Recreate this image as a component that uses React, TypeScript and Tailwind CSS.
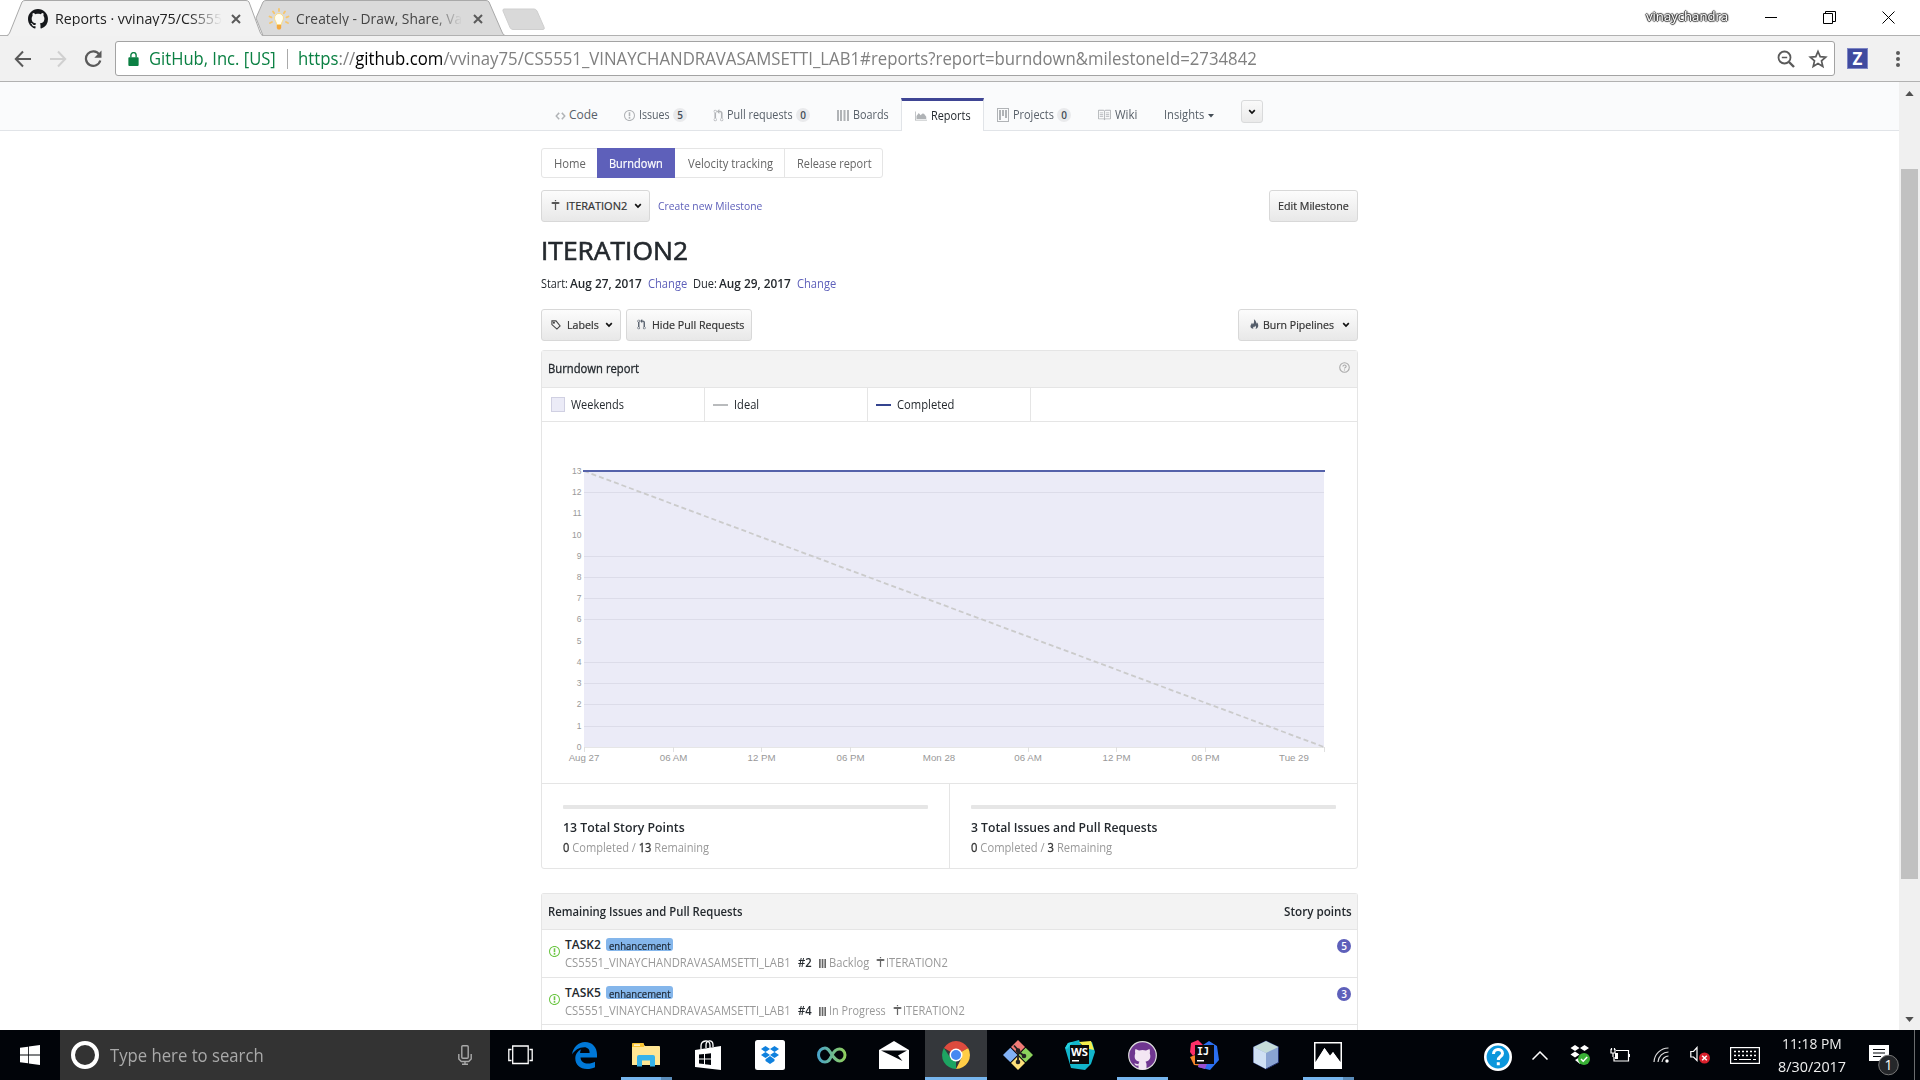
import React, { useLayoutEffect, useRef, useState } from "react";

/* Single line of text condensed or widened to the width of its box. */
function Fit({ className = "", children }: { className?: string; children: React.ReactNode }) {
  const outer = useRef<HTMLSpanElement>(null);
  const inner = useRef<HTMLSpanElement>(null);
  const [scale, setScale] = useState(1);
  useLayoutEffect(() => {
    if (outer.current && inner.current) {
      setScale(outer.current.offsetWidth / inner.current.offsetWidth);
    }
  }, []);
  return (
    <span ref={outer} className={"inline-block shrink-0 whitespace-pre " + className}>
      <span ref={inner} className="inline-block origin-left" style={{ transform: `scaleX(${scale})` }}>
        {children}
      </span>
    </span>
  );
}

const paths = {
  code: "M9.5 3L8 4.5 11.5 8 8 11.5 9.5 13 14 8 9.5 3zm-5 0L0 8l4.5 5L6 11.5 2.5 8 6 4.5 4.5 3z",
  issue:
    "M7 2.3c3.14 0 5.7 2.56 5.7 5.7s-2.56 5.7-5.7 5.7A5.71 5.71 0 0 1 1.3 8c0-3.14 2.56-5.7 5.7-5.7zM7 1C3.14 1 0 4.14 0 8s3.14 7 7 7 7-3.14 7-7-3.14-7-7-7zm1 3H6v5h2V4zm0 6H6v2h2v-2z",
  pull: "M11 11.28V5c-.03-.78-.34-1.47-.94-2.06C9.46 2.35 8.78 2.03 8 2H7V0L4 3l3 3V4h1c.27.02.48.11.69.31.21.2.3.42.31.69v6.28A1.993 1.993 0 0 0 10 15a1.993 1.993 0 0 0 1-3.72zm-1 2.92c-.66 0-1.2-.55-1.2-1.2 0-.65.55-1.2 1.2-1.2.65 0 1.2.55 1.2 1.2 0 .65-.55 1.2-1.2 1.2zM4 3c0-1.11-.89-2-2-2a1.993 1.993 0 0 0-1 3.72v6.56A1.993 1.993 0 0 0 2 15a1.993 1.993 0 0 0 1-3.72V4.72c.59-.34 1-.98 1-1.72zm-.8 10c0 .66-.55 1.2-1.2 1.2-.65 0-1.2-.55-1.2-1.2 0-.65.55-1.2 1.2-1.2.65 0 1.2.55 1.2 1.2zM2 4.2C1.34 4.2.8 3.65.8 3c0-.65.55-1.2 1.2-1.2.65 0 1.2.55 1.2 1.2 0 .65-.55 1.2-1.2 1.2z",
  boards: "M0 1h2v11H0zM3 1h2v11H3zM6.500 1h2v11h-2zM10 1h2v11h-2z",
  bars: "M0 0h1.700v9H0zM2.700 0h1.700v9H2.700zM5.400 0h1.700v9H5.400z",
  graph: "M0 2h1v11h15v1H0zM2 12V8l3-4 2.5 3L10 4.5 12 5l3 4v3z",
  project: "M0 0h12v14H0zM1 1v12h10V1zM2 2h2v10H2zM5 2h2v6H5zM8 2h2v8H8z",
  book: "M3 5h4v1H3V5zm0 3h4V7H3v1zm0 2h4V9H3v1zm11-5h-4v1h4V5zm0 2h-4v1h4V7zm0 2h-4v1h4V9zm2-6v9c0 .55-.45 1-1 1H9.5l-1 1-1-1H2c-.55 0-1-.45-1-1V3c0-.55.45-1 1-1h5.5l1 1 1-1H15c.55 0 1 .45 1 1zm-8 .5L7.5 3H2v9h6V3.5zm7-.5H9.5l-.5.5V12h6V3z",
  milestone: "M6 0h2v2H6zM2 3h10l2 1.7L12 6.5H8V16H6V6.5H2L0 4.7z",
  github:
    "M8 0C3.58 0 0 3.58 0 8c0 3.54 2.29 6.53 5.47 7.59.4.07.55-.17.55-.38 0-.19-.01-.82-.01-1.49-2.01.37-2.53-.49-2.69-.94-.09-.23-.48-.94-.82-1.13-.28-.15-.68-.52-.01-.53.63-.01 1.08.58 1.23.82.72 1.21 1.87.87 2.33.66.07-.52.28-.87.51-1.07-1.78-.2-3.64-.89-3.64-3.95 0-.87.31-1.59.82-2.15-.08-.2-.36-1.02.08-2.12 0 0 .67-.21 2.2.82.64-.18 1.32-.27 2-.27.68 0 1.36.09 2 .27 1.53-1.04 2.2-.82 2.2-.82.44 1.1.16 1.92.08 2.12.51.56.82 1.27.82 2.15 0 3.07-1.87 3.75-3.65 3.95.29.25.54.73.54 1.48 0 1.07-.01 1.93-.01 2.2 0 .21.15.46.55.38A8.013 8.013 0 0 0 16 8c0-4.42-3.58-8-8-8z",
  flame:
    "M6 16C2 16 0 13.500 1 10.500C1.500 8.800 3 8 3 6C4.500 7 4.700 8 4.600 9C6.500 7 7.500 3.500 6.500 0C10 2 10.500 5 10.500 7.500C11.300 7 11.500 6 11.500 5C14 8 14.500 11 13 13.500C12 15.200 10.500 16 9 16C10.500 14.500 10.500 12.500 8.500 10.500C8.500 12 7.500 12.500 7 13.500C6.500 12.900 6.300 12.500 6.200 12C5 13.500 5 15 6 16Z",
};

function Oct({ d, box, className }: { d: string; box: string; className: string }) {
  return (
    <svg viewBox={box} className={"block shrink-0 fill-current " + className}>
      <path d={d} fillRule="evenodd" />
    </svg>
  );
}

function Chevron({ className = "" }: { className?: string }) {
  return (
    <svg viewBox="0 0 8 6" className={"block h-[6px] w-[8px] shrink-0 fill-none stroke-[#111] stroke-[1.700] " + className}>
      <path d="M1.200 1.200 4 4 6.800 1.200" />
    </svg>
  );
}

function Close({ className = "" }: { className?: string }) {
  return (
    <svg viewBox="0 0 10 10" className={"block size-[10px] shrink-0 fill-none stroke-[#5a5a5a] stroke-2 " + className}>
      <path d="M1 1 9 9M9 1 1 9" />
    </svg>
  );
}

function TabStrip() {
  return (
    <div className="flex h-[35px] bg-white pl-[7px]">
      <div className="relative z-10 h-[36px] w-[256px] shrink-0">
        <svg viewBox="0 0 256 36" className="absolute inset-0 h-[36px] w-[256px]">
          <path d="M0 36 L2 35 L15 2 Q16 .5 18 .5 H239 Q241 .5 242 2 L254 35 L256 36Z" fill="#f2f2f2" />
          <path d="M0 35.500 Q2 35 3 32 L15 2 Q16 .5 18 .5 H239 Q241 .5 242 2 L253 32 Q254 35 256 35.500" fill="none" stroke="#a9a9a9" />
        </svg>
        <div className="relative flex h-[37px] items-center pl-[21px]">
          <Oct d={paths.github} box="0 0 16 16" className="size-[20px] text-[#16181b]" />
          <Fit className="ml-[7px] w-[167px] text-[15px] text-[#222] [mask-image:linear-gradient(to_right,#000_80%,transparent)]">
            Reports · vvinay75/CS555
          </Fit>
          <Close className="ml-[9px]" />
        </div>
      </div>
      <div className="relative -ml-[15px] h-[35px] w-[257px] shrink-0">
        <svg viewBox="0 0 257 35" className="absolute inset-0 h-[35px] w-[257px]">
          <path d="M15 35.500 L8 18 L15 2 Q16 .5 18 .5 H238 Q240 .5 241 2 L254 32 Q255 35 257 35.500Z" fill="#dadada" stroke="#a9a9a9" />
        </svg>
        <div className="relative flex h-[37px] items-center pl-[20px]">
          <svg viewBox="0 0 22 22" className="size-[22px] shrink-0">
            <g stroke="#f7c66b" strokeWidth="1.800" strokeLinecap="round">
              <path d="M11 1v2M5 3.500l1.200 1.800M17 3.500l-1.200 1.800M1.500 8.500l2 .8M20.500 8.500l-2 .8M2 15l2-1M20 15l-2-1" />
            </g>
            <path d="M11 5.500a4.500 4.500 0 0 0-4.500 4.600c0 2.600 2 3.600 2 6.400h5c0-2.800 2-3.800 2-6.400A4.500 4.500 0 0 0 11 5.500z" fill="#fffdf0" stroke="#fbdc83" />
            <path d="M8.800 17h4.400v3l-1 1.500H9.800l-1-1.500z" fill="#f3a73c" />
          </svg>
          <Fit className="ml-[6px] w-[166px] text-[15px] text-[#444] [mask-image:linear-gradient(to_right,#000_82%,transparent)]">
            Creately - Draw, Share, Va
          </Fit>
          <Close className="ml-[11px]" />
        </div>
      </div>
      <svg viewBox="0 0 44 22" className="-ml-[3px] mt-[8px] h-[22px] w-[44px] shrink-0">
        <path d="M2 1 H32 Q34 1 35 3 L42 19 Q43 21.500 41 21.500 H11 Q9 21.500 8 19.500 L1 3 Q.5 1 2 1Z" fill="#d9d9d9" stroke="#cfcfcf" />
      </svg>
      <div className="ml-auto flex h-[34px] items-center">
        <Fit className="w-[82px] text-[12px] text-white [text-shadow:-1px_0_1px_#333,1px_0_1px_#333,0_-1px_1px_#333,0_1px_1px_#333]">
          vinaychandra
        </Fit>
        <svg viewBox="0 0 13 13" className="ml-[37px] size-[13px] fill-none stroke-black">
          <path d="M0 6.500h12" />
        </svg>
        <svg viewBox="0 0 13 13" className="ml-[45px] size-[13px] fill-none stroke-black">
          <path d="M.5 2.500h9v10h-9zM2.500 2.500v-2h10v10h-3" />
        </svg>
        <svg viewBox="0 0 13 13" className="mr-[25px] ml-[46px] size-[13px] fill-none stroke-black">
          <path d="M.5 .5l12 12M12.500 .5l-12 12" />
        </svg>
      </div>
    </div>
  );
}

function Toolbar() {
  return (
    <div className="flex h-[47px] items-center border-y border-[#b1b1b1] bg-[#f1f1f1]">
      <svg viewBox="0 0 18 18" className="ml-[14px] size-[18px] fill-none stroke-[#5a5a5a] stroke-2">
        <path d="M17 9H2M9 1.500 1.800 9 9 16.500" />
      </svg>
      <svg viewBox="0 0 18 18" className="ml-[17px] size-[18px] fill-none stroke-[#d0d0d0] stroke-2">
        <path d="M1 9h15M9 1.500 16.200 9 9 16.500" />
      </svg>
      <svg viewBox="0 0 18 18" className="ml-[17px] size-[18px] fill-none stroke-[#5a5a5a] stroke-[2.200]">
        <path d="M15.300 4.500A7.300 7.300 0 1 0 16.300 10.500" />
        <path d="M17.500 .5v7.200h-7.200z" className="fill-[#5a5a5a] stroke-none" />
      </svg>
      <div className="ml-[13px] flex h-[35px] w-[1720px] items-center rounded-[3px] border border-[#a3a3a3] bg-white text-[17.500px]">
        <svg viewBox="0 0 11 15" className="ml-[12px] h-[14px] w-[11px]">
          <rect y="5.500" width="11" height="9.500" rx="1" fill="#0b8043" />
          <path d="M2.700 6V3.500a2.800 2.800 0 0 1 5.600 0V6" fill="none" stroke="#0b8043" strokeWidth="1.500" />
        </svg>
        <Fit className="ml-[10px] w-[127px] text-[#0b8043]">GitHub, Inc. [US]</Fit>
        <span className="ml-[11px] h-[20px] w-px bg-[#aaa]" />
        <Fit className="ml-[10px] w-[959px] text-[#808080]">
          <span className="text-[#0b8043]">https</span>://<span className="text-black">github.com</span>
          /vvinay75/CS5551_VINAYCHANDRAVASAMSETTI_LAB1#reports?report=burndown&amp;milestoneId=2734842
        </Fit>
        <svg viewBox="0 0 18 18" className="ml-auto size-[18px] fill-none stroke-[#5a5a5a] stroke-[1.800]">
          <circle cx="7.500" cy="7.500" r="6" />
          <path d="M4.800 7.500h5.400" className="stroke-[1.500]" />
          <path d="M12 12l5 5" className="stroke-[2.400]" />
        </svg>
        <svg viewBox="0 0 20 20" className="mr-[6px] ml-[13px] size-[20px] fill-none stroke-[#5a5a5a] stroke-[1.700]">
          <path d="M10 2.500l2.200 5.200 5.500.5-4.200 3.700 1.300 5.500L10 14.500l-4.800 2.900 1.300-5.500L2.300 8.200l5.500-.5z" />
        </svg>
      </div>
      <div className="ml-[12px] flex h-[21px] w-[21px] items-center justify-center border border-[#7d85c4] bg-[#3f4a9f] text-[17px] font-bold text-white">
        Z
      </div>
      <svg viewBox="0 0 4 16" className="ml-[28px] h-[16px] w-[4px] fill-[#5a5a5a]">
        <circle cx="2" cy="2" r="2" />
        <circle cx="2" cy="8" r="2" />
        <circle cx="2" cy="14" r="2" />
      </svg>
    </div>
  );
}

function Count({ children, className }: { children: React.ReactNode; className: string }) {
  return (
    <span className={"flex h-[14px] w-[14px] shrink-0 items-center justify-center rounded-full bg-[#e9eaec] text-[10px] font-semibold text-[#444d56] " + className}>
      {children}
    </span>
  );
}

function RepoNav() {
  return (
    <div className="flex h-[49px] items-end border-b border-[#e1e4e8] bg-[#fafbfc] text-[12px] text-[#586069]">
      <div className="flex h-[31px] items-center pl-[555px]">
        <Oct d={paths.code} box="0 0 14 16" className="mt-[2px] h-[12px] w-[11px] text-[#b0b3b6]" />
        <Fit className="ml-[3px] w-[29px]">Code</Fit>
        <Oct d={paths.issue} box="0 0 14 16" className="mt-[2px] ml-[26px] h-[13px] w-[11px] text-[#b0b3b6]" />
        <Fit className="ml-[4px] w-[31px]">Issues</Fit>
        <Count className="ml-[3px]">5</Count>
        <Oct d={paths.pull} box="0 0 12 16" className="mt-[2px] ml-[26px] h-[13px] w-[11px] text-[#b0b3b6]" />
        <Fit className="ml-[3px] w-[66px]">Pull requests</Fit>
        <Count className="ml-[3px]">0</Count>
        <Oct d={paths.boards} box="0 0 12 13" className="mt-[2px] ml-[27px] h-[13px] w-[12px] text-[#b0b3b6]" />
        <Fit className="ml-[4px] w-[36px]">Boards</Fit>
      </div>
      <div className="-mb-px ml-[12px] flex h-[33px] w-[83px] items-center border-x border-t-3 border-x-[#e1e4e8] border-t-[#3f4594] bg-white pl-[13px] text-[#24292e]">
        <Oct d={paths.graph} box="0 0 16 16" className="h-[12px] w-[12px] text-[#b0b3b6]" />
        <Fit className="-mt-px ml-[4px] w-[40px]">Reports</Fit>
      </div>
      <div className="flex h-[31px] items-center">
        <Oct d={paths.project} box="0 0 12 14" className="mt-[1px] ml-[13px] h-[14px] w-[12px] text-[#b0b3b6]" />
        <Fit className="ml-[4px] w-[41px]">Projects</Fit>
        <Count className="ml-[3px]">0</Count>
        <Oct d={paths.book} box="1 0 15 16" className="mt-[1px] ml-[27px] h-[14px] w-[13px] text-[#b0b3b6]" />
        <Fit className="ml-[4px] w-[22px]">Wiki</Fit>
        <Fit className="ml-[27px] w-[40px]">Insights</Fit>
        <svg viewBox="0 0 6 4" className="mt-[2px] ml-[4px] h-[4px] w-[6px] fill-[#444d56]">
          <path d="M0 0h6L3 3.500z" />
        </svg>
      </div>
      <button className="mb-[7px] ml-[27px] flex h-[23px] w-[22px] items-center justify-center rounded-[3px] border border-[#d9dadb] bg-linear-to-b from-[#fafafa] to-[#eaeaea]">
        <Chevron />
      </button>
    </div>
  );
}

function Btn({ className = "", children }: { className?: string; children: React.ReactNode }) {
  return (
    <button className={"flex h-[32px] shrink-0 items-center rounded-[3px] border border-[#d8d8d8] bg-linear-to-b from-[#fcfcfc] to-[#e8e8e8] pb-[2px] text-[11px] text-[#333] [-webkit-text-stroke:0.200px_#333] " + className}>
      {children}
    </button>
  );
}

const yLabels = [0, 1, 2, 3, 4, 5, 6, 7, 8, 9, 10, 11, 12, 13];
const gridLines = [1, 2, 3, 4, 6, 7, 8, 9, 12];
const xLabels: [number, string][] = [
  [584, "Aug 27"],
  [673.5, "06 AM"],
  [761.5, "12 PM"],
  [850.5, "06 PM"],
  [939, "Mon 28"],
  [1028, "06 AM"],
  [1116.5, "12 PM"],
  [1205.5, "06 PM"],
  [1294, "Tue 29"],
];
const ticks = [584.5, 673.5, 761.5, 850.5, 1028.5, 1116.5, 1205.5, 1324.5];
const yAt = (v: number) => 747.3 - v * 21.23;

function BurndownChart() {
  return (
    <svg viewBox="542 422 815 361" className="block h-[361px] w-[815px]">
      <rect x="584" y="471" width="740" height="276" fill="#ebebf7" />
      {gridLines.map((v) => (
        <rect key={v} x="584" y={Math.floor(yAt(v))} width="740" height="1" fill="#dcdce9" />
      ))}
      <rect x="584" y="747" width="741" height="1" fill="#e6e6e6" />
      {ticks.map((x) => (
        <path key={x} d={`M${x} 747v5`} stroke="#e0e0e0" />
      ))}
      <path d="M584 471 L1324 747" stroke="#cbcbcb" strokeWidth="1.800" strokeDasharray="5 3" />
      <rect x="583" y="470" width="742" height="2" fill="#5562aa" />
      <g fontFamily="Liberation Sans, sans-serif" fill="#999">
        {yLabels.map((v) => (
          <text key={v} x="581.500" y={yAt(v) + 2.5} fontSize="8.500" textAnchor="end">
            {v}
          </text>
        ))}
        {xLabels.map(([x, label]) => (
          <text key={x} x={x} y="761" fontSize="9.700" textAnchor="middle">
            {label}
          </text>
        ))}
      </g>
    </svg>
  );
}

function IssueRow({ title, num, pipeline, pipelineWidth, points, height }: { title: string; num: string; pipeline: string; pipelineWidth: string; points: string; height: string }) {
  return (
    <div className={"flex border-b border-[#e5e5e5] pr-[6px] pl-[7px] " + height}>
      <Oct d={paths.issue} box="0 1 14 14" className="mt-[16px] size-[11px] text-[#6cc644]" />
      <div className="ml-[5px]">
        <div className="mt-[8px] flex h-[13px] items-center text-[12px]">
          <Fit className="w-[36px] font-semibold text-[#24292e]">{title}</Fit>
          <span className="ml-[5px] flex h-[13px] w-[67px] items-center justify-center rounded-[3px] bg-[#84b6eb]">
            <Fit className="mt-[2px] w-[62px] text-[10px] text-[#1c2733] [-webkit-text-stroke:0.200px_#1c2733]">enhancement</Fit>
          </span>
        </div>
        <div className="mt-[4px] flex h-[16px] items-center text-[12px] text-[#999]">
          <Fit className="w-[226px]">CS5551_VINAYCHANDRAVASAMSETTI_LAB1</Fit>
          <Fit className="ml-[7px] w-[14px] font-semibold text-[#24292e]">{num}</Fit>
          <Oct d={paths.bars} box="0 0 7 9" className="ml-[7px] h-[9px] w-[7px] text-[#666]" />
          <Fit className={"ml-[3px] " + pipelineWidth}>{pipeline}</Fit>
          <Oct d={paths.milestone} box="0 0 14 16" className="mb-[3px] ml-[7px] h-[10px] w-[9px] text-[#666]" />
          <Fit className="ml-[1px] w-[62px]">ITERATION2</Fit>
        </div>
      </div>
      <span className="mt-[9px] ml-auto flex size-[14px] items-center justify-center rounded-full bg-[#5e60ba] text-[10px] font-semibold text-white">
        {points}
      </span>
    </div>
  );
}

function Stat({ total, totalWidth, remaining, restWidth, className = "" }: { total: string; totalWidth: string; remaining: string; restWidth: string; className?: string }) {
  return (
    <div className={"h-[84px] pl-[21px] " + className}>
      <div className="mt-[21px] h-[4px] w-[365px] rounded-[1px] bg-[#e6e6e6]" />
      <div className="mt-[10px] flex h-[16px] items-center text-[13px] font-semibold text-[#24292e]">
        <Fit className={totalWidth}>{total}</Fit>
      </div>
      <div className="mt-[5px] flex h-[16px] items-center text-[12px] text-[#999]">
        <Fit className={restWidth}>
          <span className="text-[#333] [-webkit-text-stroke:0.300px_#333]">0</span> Completed / <span className="text-[#333] [-webkit-text-stroke:0.300px_#333]">{remaining}</span> Remaining
        </Fit>
      </div>
    </div>
  );
}

function Page() {
  return (
    <div className="w-[1899px] bg-white">
      <RepoNav />
      <div className="ml-[541px] w-[817px]">
        <div className="mt-[17px] flex h-[30px] w-[342px] items-center rounded-[3px] border border-[#e5e5e5] text-[12px] text-[#666]">
          <Fit className="mt-[2px] ml-[12px] w-[32px]">Home</Fit>
          <span className="ml-[11px] flex h-[30px] w-[78px] items-center bg-[#5e60ba] pl-[12px] text-white [-webkit-text-stroke:0.200px_white]">
            <Fit className="mt-[2px] w-[54px]">Burndown</Fit>
          </span>
          <Fit className="mt-[2px] ml-[13px] w-[85px]">Velocity tracking</Fit>
          <span className="ml-[11px] h-[28px] w-px bg-[#e5e5e5]" />
          <Fit className="mt-[2px] ml-[12px] w-[75px]">Release report</Fit>
        </div>
        <div className="mt-[12px] flex items-center">
          <Btn className="w-[109px] pl-[9px]">
            <Oct d={paths.milestone} box="0 0 14 16" className="h-[10px] w-[9px] text-[#555]" />
            <Fit className="ml-[6px] w-[61px]">ITERATION2</Fit>
            <Chevron className="mt-[2px] ml-[7px]" />
          </Btn>
          <Fit className="ml-[8px] w-[104px] text-[11.500px] text-[#5e60ba]">Create new Milestone</Fit>
          <Btn className="ml-auto w-[89px] justify-center">
            <Fit className="w-[71px]">Edit Milestone</Fit>
          </Btn>
        </div>
        <div className="mt-[13px] flex h-[32px] items-center text-[25.500px] text-[#24292e] [-webkit-text-stroke:0.600px_#24292e]">
          <Fit className="w-[147px]">ITERATION2</Fit>
        </div>
        <div className="mt-[9px] flex h-[16px] items-center text-[12px] text-[#24292e]">
          <Fit className="w-[27px]">Start:</Fit>
          <Fit className="ml-[2px] w-[72px] font-semibold">Aug 27, 2017</Fit>
          <Fit className="ml-[6px] w-[39px] text-[#5e60ba]">Change</Fit>
          <Fit className="ml-[6px] w-[24px]">Due:</Fit>
          <Fit className="ml-[2px] w-[72px] font-semibold">Aug 29, 2017</Fit>
          <Fit className="ml-[6px] w-[39px] text-[#5e60ba]">Change</Fit>
        </div>
        <div className="mt-[17px] flex items-center">
          <Btn className="w-[80px] pl-[9px]">
            <svg viewBox="0 0 11 11" className="mt-[1px] size-[10px] shrink-0 fill-none stroke-[#444] stroke-[1.200]">
              <path d="M1 1h4.500L10 6.500 6.500 10 1 5z" />
              <circle cx="3.200" cy="3" r=".6" />
            </svg>
            <Fit className="ml-[6px] w-[32px]">Labels</Fit>
            <Chevron className="mt-[2px] ml-[6px]" />
          </Btn>
          <Btn className="ml-[5px] w-[126px] pl-[10px]">
            <Oct d={paths.pull} box="0 0 12 16" className="h-[11px] w-[9px] text-[#555e6b]" />
            <Fit className="ml-[6px] w-[92px]">Hide Pull Requests</Fit>
          </Btn>
          <Btn className="ml-auto w-[120px] pl-[11px]">
            <Oct d={paths.flame} box="0 0 15 16" className="h-[10px] w-[9px] text-[#555e6b]" />
            <Fit className="ml-[4px] w-[71px]">Burn Pipelines</Fit>
            <Chevron className="mt-[2px] ml-[8px]" />
          </Btn>
        </div>

        <div className="mt-[9px] rounded-[3px] border border-[#e5e5e5]">
          <div className="flex h-[37px] items-center border-b border-[#e5e5e5] bg-[#f3f3f3] pr-[7px] pl-[6px] text-[12px] text-[#24292e] [-webkit-text-stroke:0.300px_#24292e]">
            <Fit className="w-[91px]">Burndown report</Fit>
            <svg viewBox="0 0 12 12" className="mb-[3px] ml-auto size-[11px] fill-none stroke-[#aaa] stroke-[1.200]">
              <circle cx="6" cy="6" r="5.200" />
              <path d="M4.300 4.900C4.300 2.800 7.800 2.800 7.800 4.900C7.800 6 6 6 6 7.200M6 8.200V9.300" />
            </svg>
          </div>
          <div className="flex h-[34px] border-b border-[#e5e5e5] text-[12px] text-[#24292e]">
            <div className="flex w-[163px] items-center border-r border-[#e5e5e5] pl-[9px]">
              <span className="h-[15px] w-[14px] border border-[#d0d0e2] bg-[#ebebf7]" />
              <Fit className="ml-[6px] w-[53px]">Weekends</Fit>
            </div>
            <div className="flex w-[163px] items-center border-r border-[#e5e5e5] pl-[8px]">
              <span className="h-[2px] w-[15px] bg-[#b9bbbd]" />
              <Fit className="ml-[6px] w-[25px]">Ideal</Fit>
            </div>
            <div className="flex w-[163px] items-center border-r border-[#e5e5e5] pl-[8px]">
              <span className="h-[2px] w-[15px] bg-[#34448f]" />
              <Fit className="ml-[6px] w-[57px]">Completed</Fit>
            </div>
          </div>
          <BurndownChart />
          <div className="flex border-t border-[#e5e5e5]">
            <Stat className="w-[408px] border-r border-[#e5e5e5]" total="13 Total Story Points" totalWidth="w-[122px]" remaining="13" restWidth="w-[146px]" />
            <Stat total="3 Total Issues and Pull Requests" totalWidth="w-[186px]" remaining="3" restWidth="w-[141px]" />
          </div>
        </div>

        <div className="mt-[24px] rounded-t-[3px] border border-b-0 border-[#e5e5e5]">
          <div className="flex h-[36px] items-center justify-between border-b border-[#e5e5e5] bg-[#f3f3f3] pt-[1px] pr-[5px] pl-[6px] text-[12px] font-semibold text-[#24292e]">
            <Fit className="w-[195px]">Remaining Issues and Pull Requests</Fit>
            <Fit className="w-[68px]">Story points</Fit>
          </div>
          <IssueRow height="h-[48px]" title="TASK2" num="#2" pipeline="Backlog" pipelineWidth="w-[40px]" points="5" />
          <IssueRow height="h-[47px]" title="TASK5" num="#4" pipeline="In Progress" pipelineWidth="w-[57px]" points="3" />
          <div className="h-[20px]" />
        </div>
      </div>
    </div>
  );
}

function Scrollbar() {
  return (
    <div className="flex w-[21px] flex-col items-center bg-[#f0f0f0]">
      <svg viewBox="0 0 10 6" className="mt-[9px] h-[5px] w-[9px] fill-[#505050]">
        <path d="M5 0l5 6H0z" />
      </svg>
      <div className="mt-[73px] h-[710px] w-[17px] bg-[#c1c1c1]" />
      <svg viewBox="0 0 10 6" className="mt-auto mb-[8px] h-[5px] w-[9px] fill-[#505050]">
        <path d="M5 6L0 0h10z" />
      </svg>
    </div>
  );
}

/* One taskbar slot, with its running indicator along the bottom edge. */
function Slot({ active = false, bar, children }: { active?: boolean; bar?: "wide" | "one" | "stack"; children: React.ReactNode }) {
  return (
    <div className={"relative flex h-[50px] w-[62px] shrink-0 items-center justify-center " + (active ? "bg-[#34373b]" : "")}>
      {children}
      {bar && (
        <div className={"absolute bottom-0 flex h-[3px] " + (bar === "wide" ? "w-[62px]" : "w-[51px]")}>
          <span className="flex-1 bg-[#76b5ed]" />
          {bar === "stack" && <span className="w-[11px] bg-[#5a8cb9]" />}
        </div>
      )}
    </div>
  );
}

function Taskbar() {
  return (
    <div className="flex h-[50px] shrink-0 items-center bg-[#010409] text-white">
      <svg viewBox="0 0 20 20" className="ml-[20px] size-[20px] fill-white">
        <path d="M0 2.800 8 1.700V9.500H0zM8.800 1.600 20 0V9.500H8.800zM0 10.400H8v7.800L0 17.200zM8.800 10.400H20V20L8.800 18.400z" />
      </svg>
      <div className="ml-[20px] flex h-[50px] w-[430px] items-center bg-[#333] pl-[11px]">
        <span className="size-[28px] rounded-full border-4 border-white" />
        <Fit className="ml-[11px] w-[154px] text-[18px] text-[#a9a9a9]">Type here to search</Fit>
        <svg viewBox="0 0 14 20" className="ml-auto mr-[18px] h-[20px] w-[14px] fill-none stroke-[#a9a9a9] stroke-[1.400]">
          <rect x="3.800" y=".8" width="6.400" height="12.500" rx="1" />
          <path d="M.8 9v5l2.500 2.500h7.400l2.500-2.500V9M7 16.500v3M4 19.300h6" />
        </svg>
      </div>
      <div className="ml-[1px] flex">
        <Slot>
          <svg viewBox="0 0 25 20" className="mr-[4px] h-[20px] w-[25px] fill-none stroke-white stroke-[1.300]">
            <path d="M4.700 1h15.500v17.500H4.700zM3.500 4.500H.8v11h2.700M21.500 4.500h2.700v11h-2.700" />
          </svg>
        </Slot>
        <Slot>
          <svg viewBox="0 0 25 27" className="h-[27px] w-[25px] fill-[#0078d7]">
            <path d="M0 12.500C1.200 5 6.500 0 13 0c7.500 0 12 5.500 12 12.500V15.500H8.500c.3 4 3.500 6 7.500 6 2.800 0 5-.7 7-1.800v5.500C20.700 26.400 18 27 15 27 8 27 3.300 22.800 3.300 16.500c0-4.200 2.300-7.500 6-9.300C8.500 8.300 8.200 9.700 8.100 11h9.500c.2-3.500-2-5.700-5.300-5.700C7 5.300 2.500 8.500 0 12.500z" />
          </svg>
        </Slot>
        <Slot bar="stack">
          <svg viewBox="0 0 28 24" className="h-[24px] w-[28px]">
            <path d="M0 1.500Q0 .5 1 .5H11L13 3H27Q28 3 28 4V22H0z" fill="#ffe694" />
            <path d="M0 4V1Q0 0 1 0H11Q12 0 12 1V4z" fill="#f9c533" />
            <path d="M2 1.500h6v1.200H2z" fill="#fff" />
            <path d="M5 23.500V14q0-2 2-2H21q2 0 2 2V23.500H18V17.500H10V23.500z" fill="#36b3ea" />
          </svg>
        </Slot>
        <Slot>
          <svg viewBox="0 0 26 30" className="h-[30px] w-[26px]">
            <path d="M0 10 26 6V30L0 27z" fill="#fff" />
            <path d="M6 9V6C6 0 15-1 15 5V8M11 8V5C11 0 18-1 18 5V7" fill="none" stroke="#fff" strokeWidth="1.300" />
            <path d="M4 14.500 9 14V18.500H4zM10 13.900 16 13.200V18.500H10zM4 19.500H9V24L4 23.500zM10 19.500H16V24.900L10 24.200z" fill="#010409" />
          </svg>
        </Slot>
        <Slot>
          <svg viewBox="0 0 30 30" className="size-[30px]">
            <rect width="30" height="30" rx="2.500" fill="#fff" />
            <path d="M10.500 6 15 9l-4.500 3L6 9zM19.500 6 24 9l-4.500 3L15 9zM10.500 12l4.500 3-4.500 3L6 15zM19.500 12l4.500 3-4.500 3L15 15zM15 16l4.500 3.200V21L15 24l-4.500-3v-1.800z" fill="#1081de" />
          </svg>
        </Slot>
        <Slot>
          <svg viewBox="0 0 30 18" className="h-[18px] w-[30px]">
            <defs>
              <linearGradient id="inf">
                <stop stopColor="#4aa5c9" />
                <stop offset="1" stopColor="#8fce5e" />
              </linearGradient>
            </defs>
            <path d="M15 9C12 4 10.500 2 8 2a6.500 7 0 0 0 0 14c4 0 5-3 7-7s4-6 7.500-6a5.500 6 0 0 1 0 12C19.500 15 18 13 15 9z" fill="none" stroke="url(#inf)" strokeWidth="3" />
          </svg>
        </Slot>
        <Slot>
          <svg viewBox="0 0 30 28" className="h-[28px] w-[30px]">
            <path d="M15 0 30 9V28H0V9z" fill="#fff" />
            <path d="M2 9.500H28L19 14.500l4.500 5.500-9-4.500z" fill="#010409" />
          </svg>
        </Slot>
        <Slot active bar="wide">
          <svg viewBox="-14 -14 28 28" className="size-[28px]">
            <path d="M0 0-12.100-7A14 14 0 0 1 12.100-7z" fill="#dd4b3e" />
            <path d="M0 0V14A14 14 0 0 1-12.100-7L-5.500 3z" fill="#1da462" />
            <path d="M0 0 12.100-7A14 14 0 0 1 0 14L5.500 3z" fill="#ffcd46" />
            <path d="M0-6.500H12.400L12.100-7 0-8z" fill="#dd4b3e" />
            <circle r="6.500" fill="#fff" />
            <circle r="5" fill="#4688f1" />
          </svg>
        </Slot>
        <Slot>
          <svg viewBox="0 0 30 30" className="size-[30px]">
            <path d="M15 0 22 7 15 14 8 7z" fill="#f07a76" />
            <path d="M7.300 7.800 14.500 15 7.300 22.200 0 15z" fill="#81b1f5" />
            <path d="M22.700 7.800 30 15 22.700 22.200 15.500 15z" fill="#8bd15d" />
            <path d="M15 16 22 23 15 30 8 23z" fill="#fde07a" />
            <path d="M11 5.500 15 10V24M15 11l6 5" fill="none" stroke="#222" strokeWidth="1.800" />
            <g fill="#222">
              <circle cx="15" cy="10.500" r="2.300" />
              <circle cx="21" cy="16" r="2.300" />
              <circle cx="15" cy="22" r="2.300" />
            </g>
          </svg>
        </Slot>
        <Slot>
          <svg viewBox="0 0 30 30" className="size-[30px]">
            <path d="M3 3 14 0 16 5 27 2 30 12 26 24 20 30 6 28 0 8z" fill="#12b5cb" />
            <path d="M14 2 26 1 29 10 20 8z" fill="#f4ee4b" />
            <path d="M2 9 0 8 3 3 8 2z" fill="#25d1e0" />
            <rect x="5" y="5" width="19" height="19" fill="#0a0a0a" />
            <text x="6" y="15.500" fontSize="11" fontWeight="700" fill="#fff" fontFamily="Open Sans, sans-serif" textLength="17" lengthAdjust="spacingAndGlyphs">WS</text>
            <rect x="7" y="20" width="7" height="1.500" fill="#fff" />
          </svg>
        </Slot>
        <Slot bar="one">
          <svg viewBox="0 0 29 29" className="size-[29px]">
            <circle cx="14.500" cy="14.500" r="13.800" fill="#6f3690" stroke="#ddd" strokeWidth="1.200" />
            <path d="M7.500 8 11 9.500q3.500-1 7 0L21.500 8q1 2.500.3 4.500c1.500 4.500-.3 7.500-4.300 8.200q1 1.200 1 3V28q-4 1-8 0v-3.500c-2.500.5-3.500-.5-4.200-2.300 1.500 0 1.800 1 4.200 1q0-1.500 1-2.500c-4-.7-5.800-3.700-4.300-8.200Q6.500 10.500 7.500 8z" fill="#f3e6f3" />
          </svg>
        </Slot>
        <Slot>
          <svg viewBox="0 0 29 30" className="h-[30px] w-[29px]">
            <path d="M1 3 8 0 14 6 3 16 0 12z" fill="#fb2f68" />
            <path d="M0 17 8 14 14 26 4 25z" fill="#f58529" />
            <path d="M13 5 19 1 27 6 29 20 20 30 8 27 13 22z" fill="#2b6ff0" />
            <path d="M13 5 8 27l7 2 6-15z" fill="#9a4fd1" />
            <rect x="5" y="5" width="19" height="19" fill="#0a0a0a" />
            <text x="7" y="15" fontSize="10" fontWeight="700" fill="#fff" fontFamily="DejaVu Sans Mono, monospace">IJ</text>
            <rect x="7" y="20" width="7" height="1.500" fill="#fff" />
          </svg>
        </Slot>
        <Slot>
          <svg viewBox="0 0 28 30" className="h-[30px] w-[28px]">
            <path d="M14 1 26.500 7V22.500L14 29 1.500 22.500V7z" fill="#8aa4d2" stroke="#23306b" />
            <path d="M14 1 26.500 7 14 13 1.500 7z" fill="#c5dcd9" />
            <path d="M1.500 7 14 13V29L1.500 22.500z" fill="#cfe0f4" />
          </svg>
        </Slot>
        <Slot bar="stack">
          <svg viewBox="0 0 28 27" className="h-[27px] w-[28px]">
            <rect width="28" height="27" fill="#fff" />
            <path d="M1.500 1.500h25V20L19 10l-3 3.500L10.500 6 1.500 20z" fill="#010409" />
            <path d="M10.500 6 20 21H1.500zM19 10l7.500 11H14z" fill="#fff" />
          </svg>
        </Slot>
      </div>
      <div className="ml-auto flex h-[50px] items-center">
        <svg viewBox="0 0 28 28" className="mt-[4px] size-[28px]">
          <circle cx="14" cy="14" r="12.700" fill="#0c97dc" stroke="#fff" strokeWidth="2.600" />
          <path d="M9.500 11C9.500 5 18.500 5 18.500 10.500C18.500 13.500 14.300 13.500 14.300 17M14.300 19.300V22.300" fill="none" stroke="#fff" strokeWidth="3" />
        </svg>
        <svg viewBox="0 0 16 9" className="ml-[20px] h-[9px] w-[16px] fill-none stroke-white stroke-[1.500]">
          <path d="M.5 8.500 8 1l7.500 7.500" />
        </svg>
        <svg viewBox="0 0 20 20" className="ml-[22px] size-[20px]">
          <path d="M5 0l4.500 3L5 6 .5 3zM14.500 0 19 3l-4.500 3L10 3zM5 6.500l4.500 3L5 12.500l-4.500-3zM10 12v7l-5-4z" fill="#fff" />
          <circle cx="14" cy="14" r="6" fill="#39b036" />
          <path d="M11 14l2.200 2.200 4-4.200" fill="none" stroke="#fff" strokeWidth="1.500" />
        </svg>
        <svg viewBox="0 0 20 14" className="ml-[20px] h-[14px] w-[20px] fill-none stroke-white stroke-[1.200]">
          <path d="M6 2.500h12.500V13H4V9M19.500 6v3M1 1v4h4V1M3 5v4M1.500 0v2M4.500 0v2" />
          <path d="M5 5h3v6H5z" className="fill-white stroke-none" />
        </svg>
        <svg viewBox="0 0 16 16" className="ml-[23px] size-[16px] fill-none stroke-[#ddd] stroke-[1.200]">
          <path d="M1 15A14.500 14.500 0 0 1 15.500 1M5 15A10.500 10.500 0 0 1 15.500 5M9 15A6.500 6.500 0 0 1 15.500 9" />
          <circle cx="14" cy="14" r="1.700" className="fill-white stroke-none" />
        </svg>
        <svg viewBox="0 0 20 18" className="ml-[21px] h-[18px] w-[20px]">
          <path d="M.8 5.500H3.500L7 1.500v13L3.500 11H.8z" fill="none" stroke="#fff" strokeWidth="1.200" />
          <circle cx="14.500" cy="12" r="5.500" fill="#d9202c" />
          <path d="M12.200 9.700l4.600 4.600M16.800 9.700l-4.600 4.600" stroke="#fff" strokeWidth="1.500" />
        </svg>
        <svg viewBox="0 0 30 17" className="ml-[20px] h-[17px] w-[30px] fill-none stroke-white">
          <rect x=".6" y=".6" width="28.800" height="15.800" strokeWidth="1.200" />
          <path d="M4 4.500h22M4 8.500h22" strokeDasharray="2 2" strokeWidth="1.500" />
          <path d="M4 12.500h3M9 12.500h12M23 12.500h3" strokeWidth="1.200" />
        </svg>
        <div className="ml-[17px] flex w-[70px] flex-col items-center text-[15px] leading-[23px] text-[#f0f0f0]">
          <Fit className="w-[60px]">11:18 PM</Fit>
          <Fit className="w-[68px]">8/30/2017</Fit>
        </div>
        <div className="relative ml-[22px] h-[50px] w-[30px]">
          <svg viewBox="0 0 30 31" className="absolute top-[15px] left-0 h-[31px] w-[30px]">
            <path d="M0 0H20V16H16L12 20V16H0z" fill="#fff" />
            <path d="M4 4.500H16M4 8H16M4 11.500H12" stroke="#010409" strokeWidth="1.200" />
            <circle cx="19.500" cy="20" r="9.800" fill="#25272a" stroke="#777" />
            <text x="19.500" y="25" fontSize="14" textAnchor="middle" fill="#fff" fontFamily="Open Sans, sans-serif">1</text>
          </svg>
        </div>
        <span className="mr-[5px] ml-[15px] h-[50px] w-px bg-[#6a6c6e]" />
      </div>
    </div>
  );
}

export default function App() {
  return (
    <div className="flex h-[1080px] w-[1920px] flex-col overflow-hidden bg-white font-['Open_Sans',sans-serif] leading-none">
      <TabStrip />
      <Toolbar />
      <div className="flex h-[948px] overflow-hidden">
        <Page />
        <Scrollbar />
      </div>
      <Taskbar />
    </div>
  );
}
